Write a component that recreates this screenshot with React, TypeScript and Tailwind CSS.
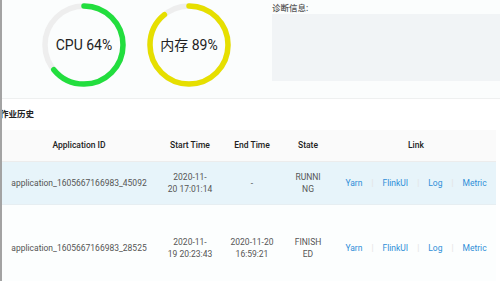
import React from "react";

const font = { fontFamily: "Roboto, 'Noto Sans CJK SC', sans-serif" };

function Gauge({ pct, color, label }: { pct: number; color: string; label: string }) {
  const r = 39;
  const c = 2 * Math.PI * r;
  return (
    <div className="relative w-[84px] h-[84px] shrink-0">
      <svg width="84" height="84" viewBox="0 0 84 84" className="absolute inset-0">
        <circle cx="42" cy="42" r={r} fill="none" stroke="#eeeeee" strokeWidth="5.5" />
        <circle
          cx="42"
          cy="42"
          r={r}
          fill="none"
          stroke={color}
          strokeWidth="5.5"
          strokeLinecap="round"
          strokeDasharray={`${(c * pct) / 100} ${c}`}
          transform="rotate(-90 42 42)"
        />
      </svg>
      <div className="absolute inset-0 flex items-center justify-center text-[14px] text-[#222]">{label}</div>
    </div>
  );
}

function Links() {
  return (
    <div className="flex items-center justify-center text-[#2f8fd8]">
      <span>Yarn</span>
      <span className="mx-[9px] text-[#e3e3e3]">|</span>
      <span>FlinkUI</span>
      <span className="mx-[9px] text-[#e3e3e3]">|</span>
      <span>Log</span>
      <span className="mx-[9px] text-[#e3e3e3]">|</span>
      <span>Metric</span>
    </div>
  );
}

function Lines({ a, b }: { a: string; b: string }) {
  return (
    <>
      <span className="block">{a}</span>
      <span className="block">{b}</span>
    </>
  );
}

export default function App() {
  return (
    <div className="w-[500px] h-[281px] overflow-hidden bg-white border-l-2 border-[#a3a3a3]" style={font}>
      <div className="h-[99px] bg-[#fbfdfd] border-b border-[#eef0f0] flex">
        <div className="flex gap-[21px] pl-[40px] pt-[3px]">
          <Gauge pct={64} color="#22de3e" label="CPU 64%" />
          <Gauge pct={89} color="#e6df00" label="内存 89%" />
        </div>
        <div className="ml-[41px] flex-1 pt-[3px]">
          <div className="text-[8.5px] leading-[11px] text-[#555] font-medium">诊断信息:</div>
          <div className="h-[67px] bg-[#f1f4f6]"></div>
        </div>
      </div>
      <div className="h-[31px] flex items-center -ml-[2px] text-[8.5px] font-bold text-[#222]">作业历史</div>
      <table className="table-fixed border-collapse text-[8.5px] leading-[12px]" style={{ width: 494 }}>
        <colgroup>
          <col style={{ width: 154 }} />
          <col style={{ width: 68 }} />
          <col style={{ width: 56 }} />
          <col style={{ width: 56 }} />
          <col style={{ width: 160 }} />
        </colgroup>
        <thead>
          <tr className="h-[31px] bg-[#fafafa] border-b border-[#ececec] text-[#222]">
            <th className="font-medium">Application ID</th>
            <th className="font-medium">Start Time</th>
            <th className="font-medium">End Time</th>
            <th className="font-medium">State</th>
            <th className="font-medium">Link</th>
          </tr>
        </thead>
        <tbody className="text-[#555]">
          <tr className="h-[43px] bg-[#e7f4fa] border-b border-[#e6eef2]">
            <td className="text-center">application_1605667166983_45092</td>
            <td className="text-center"><Lines a="2020-11-" b="20 17:01:14" /></td>
            <td className="text-center">-</td>
            <td className="text-center"><Lines a="RUNNI" b="NG" /></td>
            <td><Links /></td>
          </tr>
          <tr className="h-[87px] bg-[#fcfefe]">
            <td className="text-center">application_1605667166983_28525</td>
            <td className="text-center"><Lines a="2020-11-" b="19 20:23:43" /></td>
            <td className="text-center"><Lines a="2020-11-20" b="16:59:21" /></td>
            <td className="text-center"><Lines a="FINISH" b="ED" /></td>
            <td><Links /></td>
          </tr>
        </tbody>
      </table>
    </div>
  );
}
